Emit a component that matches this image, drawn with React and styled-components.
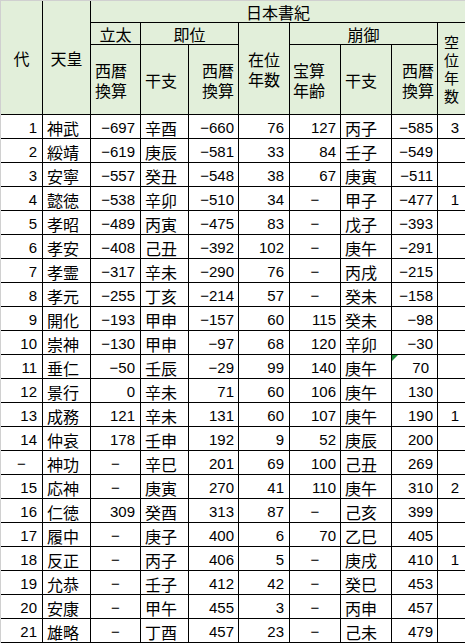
import React from "react";
import styled, { createGlobalStyle } from "styled-components";

const GlobalStyle = createGlobalStyle`
  html, body {
    margin: 0;
    padding: 0;
    background: #fff;
    overflow: hidden;
  }
`;

// 列ごとの種類と余白
const columns = [
  { kind: "num", pad: 5 },
  { kind: "kanji", pad: 4 },
  { kind: "num", pad: 5 },
  { kind: "kanji", pad: 4 },
  { kind: "num", pad: 4 },
  { kind: "num", pad: 5 },
  { kind: "num", pad: 4 },
  { kind: "kanji", pad: 4 },
  { kind: "num", pad: 4 },
  { kind: "num", pad: 6 },
];

const D = "−";

const rows = [
  ["1", "神武", "−697", "辛酉", "−660", "76", "127", "丙子", "−585", "3"],
  ["2", "綏靖", "−619", "庚辰", "−581", "33", "84", "壬子", "−549", ""],
  ["3", "安寧", "−557", "癸丑", "−548", "38", "67", "庚寅", "−511", ""],
  ["4", "懿徳", "−538", "辛卯", "−510", "34", D, "甲子", "−477", "1"],
  ["5", "孝昭", "−489", "丙寅", "−475", "83", D, "戊子", "−393", ""],
  ["6", "孝安", "−408", "己丑", "−392", "102", D, "庚午", "−291", ""],
  ["7", "孝霊", "−317", "辛未", "−290", "76", D, "丙戌", "−215", ""],
  ["8", "孝元", "−255", "丁亥", "−214", "57", D, "癸未", "−158", ""],
  ["9", "開化", "−193", "甲申", "−157", "60", "115", "癸未", "−98", ""],
  ["10", "崇神", "−130", "甲申", "−97", "68", "120", "辛卯", "−30", ""],
  ["11", "垂仁", "−50", "壬辰", "−29", "99", "140", "庚午", "70", ""],
  ["12", "景行", "0", "辛未", "71", "60", "106", "庚午", "130", ""],
  ["13", "成務", "121", "辛未", "131", "60", "107", "庚午", "190", "1"],
  ["14", "仲哀", "178", "壬申", "192", "9", "52", "庚辰", "200", ""],
  [D, "神功", D, "辛巳", "201", "69", "100", "己丑", "269", ""],
  ["15", "応神", D, "庚寅", "270", "41", "110", "庚午", "310", "2"],
  ["16", "仁徳", "309", "癸酉", "313", "87", D, "己亥", "399", ""],
  ["17", "履中", D, "庚子", "400", "6", "70", "乙巳", "405", ""],
  ["18", "反正", D, "丙子", "406", "5", D, "庚戌", "410", "1"],
  ["19", "允恭", D, "壬子", "412", "42", D, "癸巳", "453", ""],
  ["20", "安康", D, "甲午", "455", "3", D, "丙申", "457", ""],
  ["21", "雄略", D, "丁酉", "457", "23", D, "己未", "479", ""],
];

// 見出し (per = 一行の文字数、折り返しで二行・縦書き風にする)
const heads = [
  { col: "1", row: "1 / 4", text: "代" },
  { col: "2", row: "1 / 4", text: "天皇" },
  { col: "3 / 11", row: "1", text: "日本書紀" },
  { col: "3", row: "2", text: "立太" },
  { col: "4 / 6", row: "2", text: "即位" },
  { col: "6", row: "2 / 4", text: "在位年数", per: 2 },
  { col: "7 / 10", row: "2", text: "崩御" },
  { col: "10", row: "2 / 4", text: "空位年数", per: 1, lh: 18, fs: 15 },
  { col: "3", row: "3", text: "西暦換算", per: 2, align: "left", pad: 4 },
  { col: "4", row: "3", text: "干支", align: "left", pad: 4 },
  { col: "5", row: "3", text: "西暦換算", per: 2, align: "right", pad: 4 },
  { col: "7", row: "3", text: "宝算年齢", per: 2, align: "left", pad: 3 },
  { col: "8", row: "3", text: "干支", align: "left", pad: 4 },
  { col: "9", row: "3", text: "西暦換算", per: 2, align: "right", pad: 3 },
];

const App = () => {
  return (
    <>
      <GlobalStyle />
      <Sheet>
        {heads.map((h, i) => (
          <Head key={i} $col={h.col} $row={h.row} $align={h.align} $pad={h.pad} $lh={h.lh} $fs={h.fs}>
            <HeadText $per={h.per}>{h.text}</HeadText>
          </Head>
        ))}

        {rows.map((r, i) =>
          r.map((v, j) => {
            const c = columns[j];
            const align = v === D ? "center" : c.kind === "kanji" ? "left" : "right";
            const marked = i === 10 && j === 8;
            return (
              <Cell key={i + "-" + j} $kanji={c.kind === "kanji"} $align={align} $pad={marked ? 8 : c.pad}>
                {marked && <ErrorMark />}
                {v}
              </Cell>
            );
          })
        )}
      </Sheet>
    </>
  );
};

export default App;

const Sheet = styled.div`
  display: grid;
  grid-template-columns: 42px 48px 50px 48px 50px 51px 51px 51px 46px 28px;
  grid-template-rows: 22px 22px 70px repeat(22, 24px);
  width: max-content;
  border-top: 1px solid #d0d0d0;
  border-left: 1px solid #d0d0d0;
  color: #000;
`;

const Head = styled.div`
  box-sizing: border-box;
  grid-column: ${(p) => p.$col};
  grid-row: ${(p) => p.$row};
  display: flex;
  align-items: center;
  justify-content: ${(p) =>
    p.$align === "left" ? "flex-start" : p.$align === "right" ? "flex-end" : "center"};
  padding-left: ${(p) => (p.$align === "left" ? p.$pad : 0)}px;
  padding-right: ${(p) => (p.$align === "right" ? p.$pad : 0)}px;
  background: #e2efda;
  border-right: 1px solid #000;
  border-bottom: 1px solid #000;
  font-family: "Noto Sans CJK JP", sans-serif;
  font-size: ${(p) => p.$fs || 16}px;
  line-height: ${(p) => p.$lh || 20}px;
`;

const HeadText = styled.div`
  text-align: center;
  white-space: ${(p) => (p.$per ? "normal" : "nowrap")};
  width: ${(p) => (p.$per ? `${p.$per}em` : "auto")};
  line-break: anywhere;
`;

const Cell = styled.div`
  box-sizing: border-box;
  position: relative;
  height: 24px;
  padding-top: 3px;
  padding-left: ${(p) => (p.$align === "left" ? p.$pad : 0)}px;
  padding-right: ${(p) => (p.$align === "right" ? p.$pad : 0)}px;
  border-right: 1px solid #000;
  border-bottom: 1px solid #000;
  text-align: ${(p) => p.$align};
  white-space: nowrap;
  line-height: 20px;
  font-family: ${(p) =>
    p.$kanji ? '"Noto Sans CJK JP", sans-serif' : '"Liberation Sans", "Noto Sans CJK JP", sans-serif'};
  font-size: ${(p) => (p.$kanji ? 16 : 15)}px;
`;

const ErrorMark = styled.span`
  position: absolute;
  top: 0;
  left: 0;
  width: 0;
  height: 0;
  border-top: 6px solid #1e8c3a;
  border-right: 6px solid transparent;
`;
